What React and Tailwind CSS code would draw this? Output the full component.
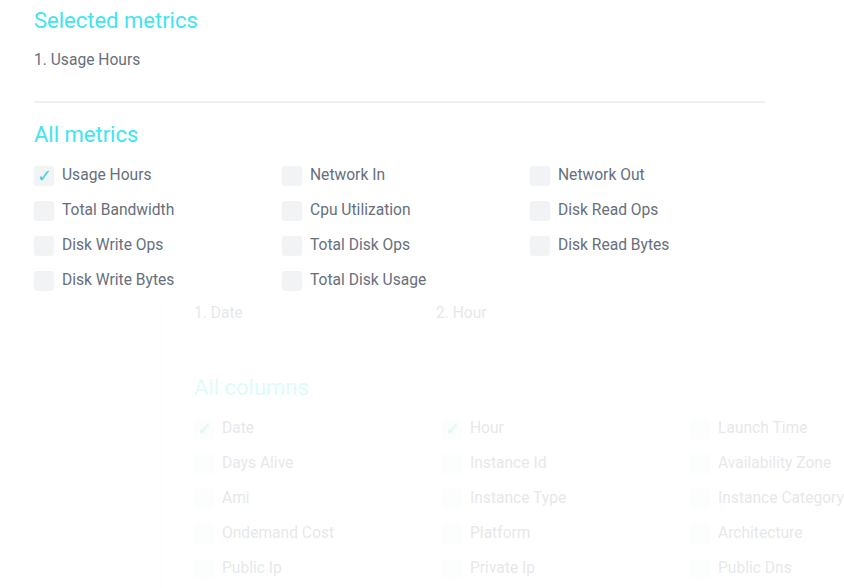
import React from "react";

const metrics = [
  ["Usage Hours", true],
  ["Network In", false],
  ["Network Out", false],
  ["Total Bandwidth", false],
  ["Cpu Utilization", false],
  ["Disk Read Ops", false],
  ["Disk Write Ops", false],
  ["Total Disk Ops", false],
  ["Disk Read Bytes", false],
  ["Disk Write Bytes", false],
  ["Total Disk Usage", false],
];

const columns = [
  ["Date", true],
  ["Hour", true],
  ["Launch Time", false],
  ["Days Alive", false],
  ["Instance Id", false],
  ["Availability Zone", false],
  ["Ami", false],
  ["Instance Type", false],
  ["Instance Category", false],
  ["Ondemand Cost", false],
  ["Platform", false],
  ["Architecture", false],
  ["Public Ip", false],
  ["Private Ip", false],
  ["Public Dns", false],
];

const Check = ({ label, checked }) => (
  <div className="flex items-center h-[35px] whitespace-nowrap">
    <span className="w-[20px] h-[20px] rounded-[3px] bg-[#f2f3f4] flex items-center justify-center text-[#2fd9e6] text-[18px] leading-none">
      {checked ? "✓" : ""}
    </span>
    <span className="ml-[8px] text-[15.6px] text-[#66707c]">{label}</span>
  </div>
);

const Picker = ({ title, selected, allTitle, items, divider }) => (
  <div>
    <h2 className="text-[22px] leading-[28px] text-[#3ee6ef] pt-[7px]">{title}</h2>
    <div className="flex mt-[15px] text-[15.6px] text-[#66707c] leading-[20px]">
      {selected.map((s, i) => (
        <div key={s} className="w-[242px]">
          {i + 1}. {s}
        </div>
      ))}
    </div>
    <div className={`mt-[31px] h-[2px] w-[731px] ${divider ? "bg-[#efefef]" : "bg-transparent"}`} />
    <h2 className="mt-[18px] text-[22px] leading-[28px] text-[#3ee6ef]">{allTitle}</h2>
    <div className="grid grid-cols-[248px_248px_248px] mt-[9px]">
      {items.map(([l, c]) => (
        <Check key={l} label={l} checked={c} />
      ))}
    </div>
  </div>
);

export default function App() {
  return (
    <div
      className="relative w-[844px] h-[588px] overflow-hidden bg-white"
      style={{ fontFamily: "Roboto, 'Liberation Sans', sans-serif" }}
    >
      <div className="absolute left-[161px] top-[253px] w-[760px] h-[400px] border-l-2 border-[#f4f4f4] pl-[31px] opacity-[0.16]">
        <Picker
          title="Selected columns"
          selected={["Date", "Hour"]}
          allTitle="All columns"
          items={columns}
        />
      </div>
      <div className="relative z-10 bg-white w-[800px] h-[300px] pl-[34px]">
        <Picker
          title="Selected metrics"
          selected={["Usage Hours"]}
          allTitle="All metrics"
          items={metrics}
          divider
        />
      </div>
    </div>
  );
}
